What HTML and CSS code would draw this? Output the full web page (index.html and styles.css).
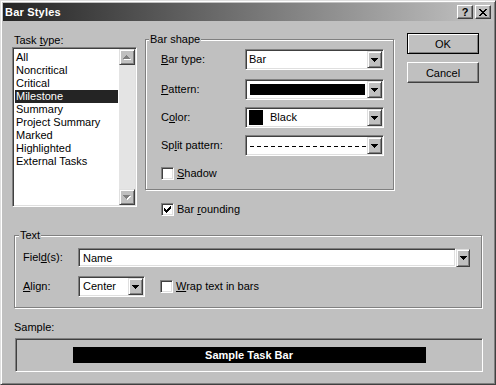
FILE: index.html
```html
<!DOCTYPE html>
<html lang="en">
<head>
  <meta charset="UTF-8" />
  <title>Bar Styles</title>
  <link rel="stylesheet" href="styles.css">
</head>
<body>
  <div class="dialog">
    <div class="titlebar">
      <span class="title">Bar Styles</span>
      <span class="cap-btn help">?</span>
      <span class="cap-btn close">
        <svg width="8" height="7" viewBox="0 0 8 7" shape-rendering="crispEdges"><path d="M0 0h2v1H0zM6 0h2v1H6zM1 1h2v1H1zM5 1h2v1H5zM2 2h4v1H2zM3 3h2v1H3zM2 4h4v1H2zM1 5h2v1H1zM5 5h2v1H5zM0 6h2v1H0zM6 6h2v1H6z" fill="#000"/></svg>
      </span>
    </div>

    <div class="content">
      <div class="top-row">
        <div class="task-col">
          <div class="task-label">Task <u>t</u>ype:</div>
          <div class="listbox">
            <ul class="items">
              <li>All</li>
              <li>Noncritical</li>
              <li>Critical</li>
              <li class="selected">Milestone</li>
              <li>Summary</li>
              <li>Project Summary</li>
              <li>Marked</li>
              <li>Highlighted</li>
              <li>External Tasks</li>
            </ul>
            <div class="scrollbar">
              <div class="scroll-btn">
                <svg width="8" height="5" viewBox="0 0 8 5" shape-rendering="crispEdges"><path d="M4 1h1v1H4zM3 2h3v1H3zM2 3h5v1H2zM1 4h7v1H1z" fill="#fff"/><path d="M3 0h1v1H3zM2 1h3v1H2zM1 2h5v1H1zM0 3h7v1H0z" fill="#808080"/></svg>
              </div>
              <div class="scroll-track"></div>
              <div class="scroll-btn">
                <svg width="8" height="5" viewBox="0 0 8 5" shape-rendering="crispEdges"><path d="M1 1h7v1H1zM2 2h5v1H2zM3 3h3v1H3zM4 4h1v1H4z" fill="#fff"/><path d="M0 0h7v1H0zM1 1h5v1H1zM2 2h3v1H2zM3 3h1v1H3z" fill="#808080"/></svg>
              </div>
            </div>
          </div>
        </div>

        <div class="shape-col">
          <div class="group shape-group">
            <span class="group-title">Bar shape</span>

            <div class="field-row first">
              <span class="row-label"><u>B</u>ar type:</span>
              <div class="combo">
                <span class="combo-value">Bar</span>
                <span class="drop"><svg width="7" height="4" viewBox="0 0 7 4" shape-rendering="crispEdges"><path d="M0 0h7v1H0zM1 1h5v1H1zM2 2h3v1H2zM3 3h1v1H3z" fill="#000"/></svg></span>
              </div>
            </div>

            <div class="field-row">
              <span class="row-label"><u>P</u>attern:</span>
              <div class="combo">
                <span class="combo-value"><span class="pattern-fill"></span></span>
                <span class="drop"><svg width="7" height="4" viewBox="0 0 7 4" shape-rendering="crispEdges"><path d="M0 0h7v1H0zM1 1h5v1H1zM2 2h3v1H2zM3 3h1v1H3z" fill="#000"/></svg></span>
              </div>
            </div>

            <div class="field-row">
              <span class="row-label">C<u>o</u>lor:</span>
              <div class="combo">
                <span class="combo-value"><span class="swatch"></span>Black</span>
                <span class="drop"><svg width="7" height="4" viewBox="0 0 7 4" shape-rendering="crispEdges"><path d="M0 0h7v1H0zM1 1h5v1H1zM2 2h3v1H2zM3 3h1v1H3z" fill="#000"/></svg></span>
              </div>
            </div>

            <div class="field-row">
              <span class="row-label">Sp<u>l</u>it pattern:</span>
              <div class="combo">
                <span class="combo-value"><span class="dash-line"></span></span>
                <span class="drop"><svg width="7" height="4" viewBox="0 0 7 4" shape-rendering="crispEdges"><path d="M0 0h7v1H0zM1 1h5v1H1zM2 2h3v1H2zM3 3h1v1H3z" fill="#000"/></svg></span>
              </div>
            </div>

            <div class="check-row shadow-row">
              <span class="checkbox"></span>
              <span><u>S</u>hadow</span>
            </div>
          </div>

          <div class="check-row rounding-row">
            <span class="checkbox">
              <svg width="7" height="7" viewBox="0 0 7 7" shape-rendering="crispEdges"><path d="M6 0h1v1H6zM5 1h2v1H5zM0 2h1v1H0zM4 2h3v1H4zM0 3h2v1H0zM3 3h3v1H3zM0 4h5v1H0zM1 5h3v1H1zM2 6h1v1H2z" fill="#000"/></svg>
            </span>
            <span>Bar <u>r</u>ounding</span>
          </div>
        </div>

        <div class="buttons">
          <button class="btn default">OK</button>
          <button class="btn">Cancel</button>
        </div>
      </div>

      <div class="group text-group">
        <span class="group-title">Text</span>
        <div class="text-row">
          <span class="text-label">Fiel<u>d</u>(s):</span>
          <div class="textbox">Name</div>
          <span class="drop loose"><svg width="7" height="4" viewBox="0 0 7 4" shape-rendering="crispEdges"><path d="M0 0h7v1H0zM1 1h5v1H1zM2 2h3v1H2zM3 3h1v1H3z" fill="#000"/></svg></span>
        </div>
        <div class="text-row align-row">
          <span class="text-label"><u>A</u>lign:</span>
          <div class="combo align-combo">
            <span class="combo-value">Center</span>
            <span class="drop"><svg width="7" height="4" viewBox="0 0 7 4" shape-rendering="crispEdges"><path d="M0 0h7v1H0zM1 1h5v1H1zM2 2h3v1H2zM3 3h1v1H3z" fill="#000"/></svg></span>
          </div>
          <div class="check-row wrap-row">
            <span class="checkbox"></span>
            <span><u>W</u>rap text in bars</span>
          </div>
        </div>
      </div>

      <div class="sample-label">Sample:</div>
      <div class="sample-box">
        <div class="sample-bar">Sample Task Bar</div>
      </div>
    </div>
  </div>
</body>
</html>
```

FILE: styles.css
```css
* {
  box-sizing: border-box;
}
body {
  margin: 0;
  font-family: "Liberation Sans", Arial, sans-serif;
  font-size: 11px;
  color: #000;
  background: #c0c0c0;
}
u {
  text-decoration: underline;
  text-underline-offset: 1px;
}
.dialog {
  width: 496px;
  height: 385px;
  background: #c0c0c0;
  border: 1px solid;
  border-color: #dfdfdf #404040 #404040 #dfdfdf;
  box-shadow: inset 1px 1px #fff, inset -1px -1px #808080;
  padding: 2px;
}
.titlebar {
  height: 18px;
  display: flex;
  align-items: center;
  padding: 0 2px 0 2px;
  background: linear-gradient(to right, #242424, #c4c4c4);
}
.title {
  flex: 1;
  color: #fff;
  font-weight: bold;
  line-height: 18px;
  letter-spacing: 0.2px;
}
.cap-btn {
  width: 16px;
  height: 14px;
  display: flex;
  align-items: center;
  justify-content: center;
  background: #c0c0c0;
  border: 1px solid;
  border-color: #fff #404040 #404040 #fff;
  box-shadow: inset -1px -1px #808080;
  font-weight: bold;
  font-size: 11px;
  line-height: 12px;
}
.close {
  margin-left: 2px;
}

.content {
  padding: 12px 0 0 9px;
}
.top-row {
  display: flex;
  align-items: flex-start;
}

/* task type list */
.task-col {
  width: 125px;
}
.task-label {
  line-height: 14px;
  padding-left: 2px;
}
.listbox {
  height: 160px;
  display: flex;
  background: #fff;
  border: 1px solid;
  border-color: #808080 #fff #fff #808080;
  box-shadow: inset 1px 1px #404040, inset -1px -1px #dfdfdf;
  padding: 1px;
}
.items {
  flex: 1;
  list-style: none;
  margin: 0;
  padding: 2px 1px 0 1px;
}
.items li {
  line-height: 13px;
  height: 13px;
  padding-left: 1px;
  white-space: nowrap;
}
.items li.selected {
  background: #242424;
  color: #fff;
}
.scrollbar {
  width: 16px;
  display: flex;
  flex-direction: column;
}
.scroll-btn {
  width: 16px;
  height: 16px;
  display: flex;
  align-items: center;
  justify-content: center;
  background: #c0c0c0;
  border: 1px solid;
  border-color: #dfdfdf #404040 #404040 #dfdfdf;
  box-shadow: inset 1px 1px #fff, inset -1px -1px #808080;
}
.scroll-track {
  flex: 1;
  background: #e4e4e4;
}

/* group boxes */
.group {
  position: relative;
  border: 1px solid #808080;
  box-shadow: inset 1px 1px #fff, 1px 1px #fff;
}
.group-title {
  position: absolute;
  top: -7px;
  left: 3px;
  padding: 0 1px;
  line-height: 13px;
  background: #c0c0c0;
}
.text-group .group-title {
  left: 4px;
}

.shape-col {
  width: 249px;
  margin-left: 8px;
  margin-top: 6px;
}
.shape-group {
  height: 151px;
  padding: 9px 0 0 15px;
}
.field-row {
  display: flex;
  align-items: center;
  height: 21px;
  margin-top: 7px;
}
.field-row.first {
  margin-top: 0;
}
.field-row.first + .field-row {
  margin-top: 9px;
}
.row-label {
  width: 84px;
  line-height: 13px;
}

/* combo boxes */
.combo {
  width: 139px;
  height: 21px;
  display: flex;
  background: #fff;
  border: 1px solid;
  border-color: #808080 #fff #fff #808080;
  box-shadow: inset 1px 1px #404040, inset -1px -1px #dfdfdf;
  padding: 1px;
}
.combo-value {
  flex: 1;
  display: flex;
  align-items: center;
  padding-left: 2px;
  line-height: 17px;
  white-space: nowrap;
}
.drop {
  width: 15px;
  height: 17px;
  display: flex;
  align-items: center;
  justify-content: center;
  background: #c0c0c0;
  border: 1px solid;
  border-color: #dfdfdf #404040 #404040 #dfdfdf;
  box-shadow: inset 1px 1px #fff, inset -1px -1px #808080;
}
.drop.loose {
  width: 14px;
  height: 18px;
  align-self: flex-start;
  margin-top: 1px;
}
.pattern-fill {
  width: 115px;
  height: 11px;
  margin-left: 1px;
  background: #000;
}
.swatch {
  width: 14px;
  height: 15px;
  background: #000;
  margin-right: 7px;
}
.dash-line {
  width: 116px;
  height: 1px;
  margin-left: 1px;
  margin-top: 1px;
  background: repeating-linear-gradient(to right, #000 0 4px, transparent 4px 7px);
}

/* checkboxes */
.check-row {
  display: flex;
  align-items: center;
  line-height: 13px;
}
.checkbox {
  width: 13px;
  height: 13px;
  margin-right: 3px;
  display: flex;
  align-items: center;
  justify-content: center;
  background: #fff;
  border: 1px solid;
  border-color: #808080 #fff #fff #808080;
  box-shadow: inset 1px 1px #404040, inset -1px -1px #dfdfdf;
}
.shadow-row {
  margin-top: 11px;
}
.rounding-row {
  margin-top: 13px;
  padding-left: 16px;
}

/* buttons */
.buttons {
  width: 72px;
  margin-left: 13px;
  display: flex;
  flex-direction: column;
  gap: 8px;
}
.btn {
  width: 72px;
  height: 21px;
  padding: 0;
  font: inherit;
  color: #000;
  background: #c0c0c0;
  border: 1px solid;
  border-color: #fff #404040 #404040 #fff;
  box-shadow: inset -1px -1px #808080;
}
.btn.default {
  border-color: #000;
  box-shadow: inset 1px 1px #fff, inset -1px -1px #808080;
}

/* text group */
.text-group {
  width: 468px;
  height: 73px;
  margin: 19px 0 0 2px;
  padding: 12px 0 0 8px;
}
.text-row {
  display: flex;
  align-items: center;
}
.align-row {
  margin-top: 9px;
}
.text-label {
  width: 55px;
  line-height: 13px;
}
.textbox {
  width: 378px;
  height: 19px;
  padding: 1px 0 0 4px;
  line-height: 16px;
  background: #fff;
  border: 1px solid;
  border-color: #808080 #fff #fff #808080;
  box-shadow: inset 1px 1px #404040, inset -1px -1px #dfdfdf;
}
.align-combo {
  width: 67px;
}
.align-combo .combo-value {
  padding-left: 3px;
}
.wrap-row {
  margin-left: 15px;
}

/* sample */
.sample-label {
  margin: 12px 0 0 2px;
  line-height: 14px;
}
.sample-box {
  width: 468px;
  height: 34px;
  margin: 4px 0 0 3px;
  display: flex;
  align-items: center;
  justify-content: center;
  border: 1px solid;
  border-color: #808080 #fff #fff #808080;
  box-shadow: inset 1px 1px #404040;
}
.sample-bar {
  width: 353px;
  height: 16px;
  line-height: 16px;
  background: #000;
  color: #fff;
  font-weight: bold;
  text-align: center;
}
```
